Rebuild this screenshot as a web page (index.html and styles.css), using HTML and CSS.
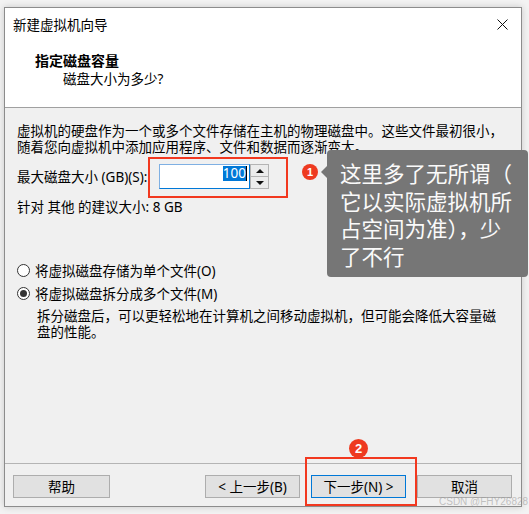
FILE: index.html
```html
<!DOCTYPE html>
<html lang="zh-CN">
<head>
<meta charset="utf-8">
<title>新建虚拟机向导</title>
<link rel="stylesheet" href="styles.css">
</head>
<body>
<div class="page">
  <div class="dialog">
    <div class="header">
      <div class="titlebar">
        <span class="title">新建虚拟机向导</span>
        <svg class="close" width="11" height="11" viewBox="0 0 11 11"><path d="M0.5 0.5 L10.5 10.5 M10.5 0.5 L0.5 10.5" stroke="#111" stroke-width="1" fill="none"/></svg>
      </div>
      <div class="heading">指定磁盘容量</div>
      <div class="subheading">磁盘大小为多少?</div>
    </div>
    <div class="content">
      <p class="intro">虚拟机的硬盘作为一个或多个文件存储在主机的物理磁盘中。这些文件最初很小，<br>随着您向虚拟机中添加应用程序、文件和数据而逐渐变大。</p>
      <div class="size-row">
        <span class="size-label">最大磁盘大小 (GB)(S):</span>
        <div class="spin">
          <div class="spin-input"><span class="sel">100</span><span class="caret"></span></div>
          <div class="spin-btns">
            <div class="spin-btn"><span class="tri-up"></span></div>
            <div class="spin-btn"><span class="tri-down"></span></div>
          </div>
        </div>
      </div>
      <p class="hint">针对 其他 的建议大小: 8 GB</p>
      <div class="options">
        <div class="radio-row"><span class="radio"></span><span>将虚拟磁盘存储为单个文件(O)</span></div>
        <div class="radio-row"><span class="radio checked"></span><span>将虚拟磁盘拆分成多个文件(M)</span></div>
        <p class="desc">拆分磁盘后，可以更轻松地在计算机之间移动虚拟机，但可能会降低大容量磁<br>盘的性能。</p>
      </div>
    </div>
    <div class="footer">
      <div class="btn help">帮助</div>
      <div class="btn">&lt; 上一步(B)</div>
      <div class="btn primary">下一步(N) &gt;</div>
      <div class="btn">取消</div>
    </div>
  </div>

  <div class="mark mark-1"></div>
  <div class="mark mark-2"></div>
  <div class="badge badge-1">1</div>
  <div class="badge badge-2">2</div>
  <div class="tip">
    <span class="tip-line">这里多了无所谓（</span>
    <span class="tip-line">它以实际虚拟机所</span>
    <span class="tip-line">占空间为准），少</span>
    <span class="tip-line">了不行</span>
  </div>
  <div class="wm">CSDN @FHY26828</div>
</div>
</body>
</html>
```

FILE: styles.css
```css
body {
  margin: 0;
  background: #f3f3f3;
  font-family: "Noto Sans", "Noto Sans CJK SC", sans-serif;
  font-size: 13.5px;
  color: #000;
}

.page {
  position: relative;
  width: 529px;
  height: 514px;
  box-sizing: border-box;
  padding: 7px 0 0 4px;
  overflow: hidden;
}

.dialog {
  width: 518px;
  height: 500px;
  box-sizing: border-box;
  border: 1px solid #8c8c8c;
  background: #f0f0f0;
  display: flex;
  flex-direction: column;
  box-shadow: 0 0 7px rgba(0, 0, 0, 0.18);
}

.header {
  height: 100px;
  box-sizing: border-box;
  background: #fff;
  border-bottom: 1px solid #a0a0a0;
}

.titlebar {
  height: 34px;
  display: flex;
  align-items: center;
  justify-content: space-between;
  padding: 0 13px 0 8px;
}

.title {
  line-height: 16px;
}

.close {
  display: block;
  margin-top: -2px;
}

.heading {
  margin-top: 9px;
  padding-left: 30px;
  font-weight: bold;
  font-size: 14px;
  line-height: 19px;
}

.subheading {
  padding-left: 58px;
  line-height: 19px;
}

.content {
  flex: 1;
  padding: 15px 0 0 12px;
}

.intro {
  margin: 0;
  line-height: 16px;
}

.size-row {
  display: flex;
  align-items: center;
  height: 25px;
  margin-top: 9px;
}

.size-label {
  width: 142px;
  line-height: 16px;
}

.spin {
  display: flex;
  height: 25px;
}

.spin-input {
  width: 91px;
  box-sizing: border-box;
  border: 1px solid #0078d7;
  border-top-color: #7fb0e3;
  border-left-color: #7fb0e3;
  background: #fff;
  display: flex;
  justify-content: flex-end;
  align-items: flex-start;
  padding: 1px 2px 0 0;
}

.sel {
  background: #0078d7;
  color: #fff;
  line-height: 15px;
}

.caret {
  width: 1px;
  height: 15px;
  background: #000;
}

.spin-btns {
  width: 19px;
  display: flex;
  flex-direction: column;
}

.spin-btn {
  flex: 1;
  box-sizing: border-box;
  border: 1px solid #b4b4b4;
  background: #ececec;
  display: flex;
  align-items: center;
  justify-content: center;
}

.spin-btn + .spin-btn {
  border-top: none;
}

.tri-up {
  width: 0;
  height: 0;
  border-left: 4px solid transparent;
  border-right: 4px solid transparent;
  border-bottom: 4px solid #111;
}

.tri-down {
  width: 0;
  height: 0;
  border-left: 4px solid transparent;
  border-right: 4px solid transparent;
  border-top: 4px solid #111;
}

.hint {
  margin: 10px 0 0;
  line-height: 16px;
}

.options {
  margin-top: 46px;
}

.radio-row {
  display: flex;
  align-items: center;
  gap: 5px;
  height: 18px;
}

.radio-row + .radio-row {
  margin-top: 5px;
}

.radio {
  width: 13px;
  height: 13px;
  box-sizing: border-box;
  border: 1px solid #333;
  border-radius: 50%;
  background: #fff;
  display: flex;
  align-items: center;
  justify-content: center;
}

.radio.checked::after {
  content: "";
  width: 7px;
  height: 7px;
  border-radius: 50%;
  background: #333;
}

.desc {
  margin: 7px 0 0 20px;
  line-height: 15.5px;
}

.footer {
  height: 43px;
  box-sizing: border-box;
  border-top: 1px solid #b4b4b4;
  padding: 11px 9px 0 8px;
  display: flex;
  gap: 11px;
}

.btn {
  width: 95px;
  height: 23px;
  box-sizing: border-box;
  border: 1px solid #adadad;
  background: #e1e1e1;
  display: flex;
  align-items: center;
  justify-content: center;
  line-height: 16px;
}

.btn.help {
  width: 97px;
  margin-right: auto;
}

.btn.primary {
  border-color: #0078d7;
}

/* annotations drawn over the screenshot */
.mark {
  position: absolute;
  box-sizing: border-box;
  border: 2px solid #f2381f;
}

.mark-1 {
  left: 148px;
  top: 157px;
  width: 140px;
  height: 41px;
}

.mark-2 {
  left: 305px;
  top: 457px;
  width: 112px;
  height: 49px;
}

.badge {
  position: absolute;
  border-radius: 50%;
  background: #ee3a20;
  color: #fff;
  font-family: "Liberation Sans", sans-serif;
  font-weight: bold;
  display: flex;
  align-items: center;
  justify-content: center;
}

.badge-1 {
  left: 302px;
  top: 164px;
  width: 16px;
  height: 16px;
  font-size: 11px;
}

.badge-2 {
  left: 349px;
  top: 439px;
  width: 19px;
  height: 19px;
  font-size: 13px;
}

.tip {
  position: absolute;
  left: 327px;
  top: 150px;
  width: 201px;
  height: 127px;
  box-sizing: border-box;
  padding: 9px 6px 0 13px;
  background: #767676;
  border-radius: 4px;
  color: #fafafa;
  font-family: "Noto Sans CJK SC", sans-serif;
  font-size: 21.5px;
  line-height: 27.5px;
}

.tip::before {
  content: "";
  position: absolute;
  left: -6px;
  top: 16px;
  border-top: 6px solid transparent;
  border-bottom: 6px solid transparent;
  border-right: 6px solid #767676;
}

.tip-line {
  display: block;
  white-space: nowrap;
}

.wm {
  position: absolute;
  left: 439px;
  top: 496px;
  white-space: nowrap;
  font-family: "Liberation Sans", sans-serif;
  font-size: 10px;
  line-height: 12px;
  color: rgba(150, 150, 150, 0.55);
}
```
